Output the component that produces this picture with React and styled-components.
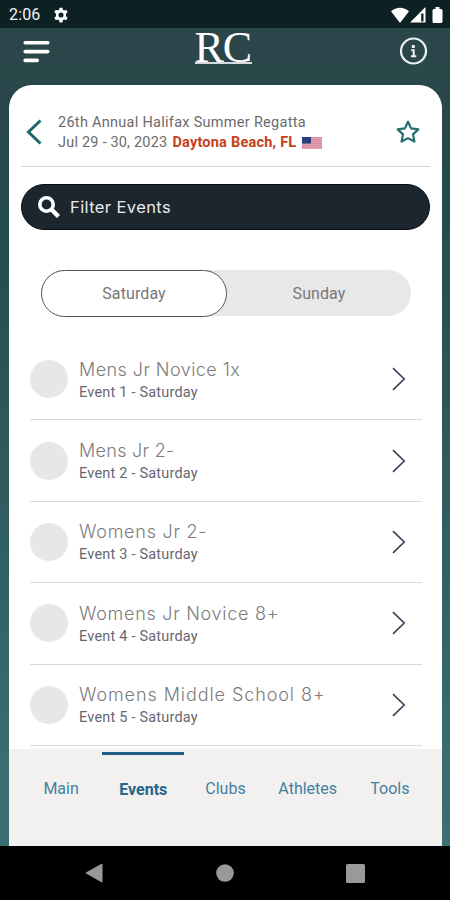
import { useState } from 'react';
import styled, { createGlobalStyle } from 'styled-components';

const GlobalStyle = createGlobalStyle`
  * {
    box-sizing: border-box;
  }
  body {
    margin: 0;
    font-family: Roboto, sans-serif;
    background: #000;
  }
  button {
    font-family: inherit;
    border: none;
    background: none;
    padding: 0;
    cursor: pointer;
  }
`;

const Screen = styled.div`
  width: 450px;
  height: 900px;
  display: flex;
  flex-direction: column;
  overflow: hidden;
  background: linear-gradient(180deg, #2b464a 28px, #29474a 100px, #254c50 240px, #2d5559 380px, #316064 560px, #3a6c70 760px, #3b6f73 846px);
`;

const StatusBar = styled.div`
  height: 28px;
  flex: none;
  display: flex;
  align-items: center;
  justify-content: space-between;
  padding: 1px 7px 0 9px;
  background: #0d2023;
`;

const StatusGroup = styled.div`
  display: flex;
  align-items: center;
  gap: ${({ $gap }) => $gap}px;
`;

const Clock = styled.span`
  font-size: 16px;
  line-height: 20px;
  letter-spacing: 0.15px;
  color: #f2f5f5;
`;

const TopBar = styled.header`
  height: 57px;
  flex: none;
  display: flex;
  align-items: flex-start;
  justify-content: space-between;
  padding: 0 22px;
`;

const IconButton = styled.button`
  display: flex;
  margin-top: ${({ $top }) => $top || 0}px;
`;

const Logo = styled.div`
  width: 57px;
  height: 36px;
  margin-left: -3px;
  font-family: 'Liberation Serif', serif;
  font-size: 44px;
  line-height: 39px;
  letter-spacing: -1.2px;
  color: #fff;
  border-bottom: 2px solid #d5dada;
`;

const Card = styled.main`
  width: 433px;
  height: 761px;
  flex: none;
  margin-left: 9px;
  display: flex;
  flex-direction: column;
  background: #fff;
  border-radius: 23px 23px 0 0;
  overflow: hidden;
`;

const RegattaHeader = styled.div`
  height: 82px;
  flex: none;
  margin: 0 12px;
  padding: 13px 10px 0 5px;
  display: flex;
  align-items: center;
  border-bottom: 1px solid #d4d4d4;
`;

const RegattaInfo = styled.div`
  flex: 1;
  padding: 2px 0 0 16px;
  font-size: 14.5px;
  line-height: 20.5px;
  color: #6b6b6b;
`;

const RegattaName = styled.div`
  letter-spacing: 0.28px;
`;

const RegattaDetails = styled.div`
  display: flex;
  align-items: center;
  letter-spacing: 0.2px;
`;

const Place = styled.span`
  margin: 0 6px 0 5px;
  font-weight: 700;
  font-size: 14.5px;
  letter-spacing: 0.22px;
  color: #c5411b;
`;

const Search = styled.button`
  height: 46px;
  flex: none;
  margin: 17px 12px 0;
  padding: 0 16px;
  display: flex;
  align-items: center;
  gap: 10px;
  background: #1b262f;
  border: 1px solid #080e14;
  border-radius: 23px;
`;

const SearchLabel = styled.span`
  font-family: Inter, sans-serif;
  font-size: 16.5px;
  letter-spacing: 0.4px;
  color: #e8eaec;
`;

const DaySwitch = styled.div`
  width: 370px;
  height: 46px;
  flex: none;
  margin: 40px 0 0 32px;
  display: flex;
  background: #e8e8e8;
  border-radius: 23px;
`;

const DayButton = styled.button`
  width: ${({ $active }) => ($active ? 186 : 184)}px;
  height: 47px;
  font-size: 16px;
  letter-spacing: 0.1px;
  color: #777;
  background: ${({ $active }) => ($active ? '#fff' : 'transparent')};
  border: ${({ $active }) => ($active ? '1px solid #555' : 'none')};
  border-radius: 24px;
`;

const EventList = styled.div`
  height: 410px;
  flex: none;
  margin: 23px 20px 0 21px;
  overflow: hidden;
`;

const EventRow = styled.div`
  height: 81.4px;
  display: flex;
  align-items: center;
  padding-right: 16px;
  border-bottom: 1.5px solid #d9d9d9;
`;

const Avatar = styled.div`
  width: 38px;
  height: 38px;
  border-radius: 50%;
  background: #e7e7e7;
`;

const EventText = styled.div`
  flex: 1;
  padding: 2px 0 0 11px;
`;

const EventName = styled.div`
  font-family: Inter, sans-serif;
  font-weight: 300;
  font-size: 18px;
  line-height: 24px;
  letter-spacing: ${({ $spacing }) => $spacing}px;
  color: #7c7c7c;
  white-space: nowrap;
`;

const EventMeta = styled.div`
  font-size: 14.5px;
  line-height: 21px;
  letter-spacing: 0.2px;
  color: #666773;
`;

const TabBar = styled.nav`
  flex: 1;
  display: flex;
  padding: 3px 11px 0 11px;
  background: #f2f1f0;
`;

const Tab = styled.button`
  flex: 1;
  height: 70px;
  border-top: 3px solid ${({ $active }) => ($active ? '#205f85' : 'transparent')};
  padding-top: ${({ $active }) => ($active ? 2 : 0)}px;
  font-size: 16px;
  font-weight: ${({ $active }) => ($active ? 700 : 400)};
  color: ${({ $active }) => ($active ? '#246789' : '#4380a0')};
`;

const SystemNav = styled.footer`
  height: 54px;
  flex: none;
  display: flex;
  align-items: center;
  justify-content: space-between;
  padding: 0 85px;
  background: #000;
`;

const events = [
  { name: 'Mens Jr Novice 1x', spacing: 0.44 },
  { name: 'Mens Jr 2-', spacing: 0.3 },
  { name: 'Womens Jr 2-', spacing: 0.75 },
  { name: 'Womens Jr Novice 8+', spacing: 0.72 },
  { name: 'Womens Middle School 8+', spacing: 0.92 },
];

const tabs = ['Main', 'Events', 'Clubs', 'Athletes', 'Tools'];

const GearIcon = () => (
  <svg width="16" height="16" viewBox="0 0 24 24" fill="#fff">
    <path
      fillRule="evenodd"
      d="M9.8 1h4.4l.6 3.2 1.9 1.1 3.1-1.1 2.2 3.8-2.5 2.1v3.8l2.5 2.1-2.2 3.8-3.1-1.1-1.9 1.1-.6 3.3H9.8l-.6-3.3-1.9-1.1-3.1 1.1L2 16l2.5-2.1v-3.8L2 8l2.2-3.8 3.1 1.1 1.9-1.1zM12 8.2a3.8 3.8 0 1 0 0 7.6 3.8 3.8 0 0 0 0-7.6z"
    />
  </svg>
);

const Flag = () => (
  <svg width="20" height="12" viewBox="0 0 20 12">
    <rect width="20" height="12" fill="#e3a1b2" />
    {[0, 2, 4, 6, 8, 10].map((y) => (
      <rect key={y} y={y} width="20" height="1" fill="#d98c9f" />
    ))}
    <rect width="9" height="6.5" fill="#2c3f7d" />
  </svg>
);

const Chevron = () => (
  <svg width="14" height="24" viewBox="0 0 14 24" fill="none" stroke="#3b3f56" strokeWidth="1.6">
    <path d="M1 1.2 12.2 12 1 22.8" />
  </svg>
);

const App = () => {
  const [day, setDay] = useState('Saturday');
  const [tab, setTab] = useState('Events');

  return (
    <>
      <GlobalStyle />
      <Screen>
        <StatusBar>
          <StatusGroup $gap={13}>
            <Clock>2:06</Clock>
            <GearIcon />
          </StatusGroup>
          <StatusGroup $gap={1}>
            <svg width="18" height="16" viewBox="0 0 18 16" fill="#fff">
              <path d="M0 4.3C5.2-.4 12.8-.4 18 4.3L9 16z" />
            </svg>
            <svg width="21" height="16" viewBox="0 0 21 16" fill="#fff">
              <path d="M15.5 0v15.5H0z" />
              <path d="M11.2 6.5h2.3v8h-2.3z" fill="#0d2023" />
            </svg>
            <svg width="11" height="16" viewBox="0 0 11 16" fill="#fff">
              <path d="M3.5 0h4v2H9q1.5 0 1.5 1.5v11Q10.500 16 9 16H2Q.5 16 .5 14.500v-11Q.5 2 2 2h1.500z" />
            </svg>
          </StatusGroup>
        </StatusBar>

        <TopBar>
          <IconButton $top={12} aria-label="Menu">
            <svg width="28" height="24" viewBox="0 0 28 24" stroke="#fff" strokeWidth="3.6" strokeLinecap="round">
              <path d="M3.2 2.8h22.6M3.2 11.6h22.6M3.2 20.4h12" />
            </svg>
          </IconButton>
          <Logo>RC</Logo>
          <IconButton $top={9} aria-label="Info">
            <svg width="29" height="29" viewBox="0 0 29 29" fill="none" stroke="#edf2f2">
              <circle cx="14.5" cy="14" r="12.5" strokeWidth="2.2" />
              <path d="M14.3 8v3" strokeWidth="3" />
              <path d="M12.2 13.2h2.5v6M12 19.3h5.3" strokeWidth="2" />
            </svg>
          </IconButton>
        </TopBar>

        <Card>
          <RegattaHeader>
            <IconButton aria-label="Back">
              <svg width="16" height="26" viewBox="0 0 16 26" fill="none" stroke="#1c6868" strokeWidth="3">
                <path d="M14.5 1.5 2.5 13l12 11.5" />
              </svg>
            </IconButton>
            <RegattaInfo>
              <RegattaName>26th Annual Halifax Summer Regatta</RegattaName>
              <RegattaDetails>
                Jul 29 - 30, 2023
                <Place>Daytona Beach, FL</Place>
                <Flag />
              </RegattaDetails>
            </RegattaInfo>
            <IconButton aria-label="Favorite">
              <svg width="24" height="24" viewBox="0 0 24 24" fill="none" stroke="#246d6d" strokeWidth="2.2" strokeLinejoin="round">
                <path d="m12 1.8 3.1 6.6 7.2 1-5.3 5 1.4 7.2L12 18.1l-6.4 3.5L7 14.4l-5.3-5 7.2-1z" />
              </svg>
            </IconButton>
          </RegattaHeader>

          <Search>
            <svg width="22" height="22" viewBox="0 0 22 22" fill="none" stroke="#fff">
              <circle cx="8.5" cy="8.5" r="6.7" strokeWidth="3.6" />
              <path d="m13.500 13.500 7 7" strokeWidth="4.4" />
            </svg>
            <SearchLabel>Filter Events</SearchLabel>
          </Search>

          <DaySwitch>
            {['Saturday', 'Sunday'].map((name) => (
              <DayButton key={name} $active={day === name} onClick={() => setDay(name)}>
                {name}
              </DayButton>
            ))}
          </DaySwitch>

          <EventList>
            {events.map(({ name, spacing }, index) => (
              <EventRow key={name}>
                <Avatar />
                <EventText>
                  <EventName $spacing={spacing}>{name}</EventName>
                  <EventMeta>Event {index + 1} - Saturday</EventMeta>
                </EventText>
                <Chevron />
              </EventRow>
            ))}
          </EventList>

          <TabBar>
            {tabs.map((name) => (
              <Tab key={name} $active={tab === name} onClick={() => setTab(name)}>
                {name}
              </Tab>
            ))}
          </TabBar>
        </Card>

        <SystemNav>
          <svg width="18" height="20" viewBox="0 0 18 20" fill="#999">
            <path d="M17 1v18L1 10z" stroke="#999" strokeLinejoin="round" />
          </svg>
          <svg width="18" height="18" viewBox="0 0 18 18" fill="#999">
            <circle cx="9" cy="9" r="8.8" />
          </svg>
          <svg width="19" height="19" viewBox="0 0 19 19" fill="#999">
            <rect width="19" height="19" rx="1.5" />
          </svg>
        </SystemNav>
      </Screen>
    </>
  );
};

export default App;
